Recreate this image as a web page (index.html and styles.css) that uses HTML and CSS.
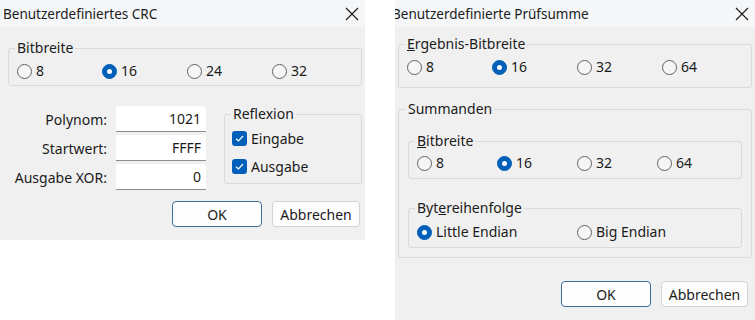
FILE: index.html
```html
<!DOCTYPE html>
<html lang="de">
<head>
  <meta charset="UTF-8">
  <meta name="viewport" content="width=device-width, initial-scale=1.0">
  <title>Benutzerdefinierte Dialoge</title>
  <link rel="stylesheet" href="styles.css">
</head>
<body>

  <div class="screen">

    <!-- Dialog 1: CRC -->
    <section class="dialog dialog-crc">
      <header class="titlebar">
        <span class="title">Benutzerdefiniertes CRC</span>
        <svg class="close" width="14" height="14" viewBox="0 0 14 14">
          <path d="M1 1 L13 13 M13 1 L1 13" stroke="#1a1a1a" stroke-width="1.1" fill="none"/>
        </svg>
      </header>
      <div class="dialog-body">
        <fieldset class="group">
          <legend>Bitbreite</legend>
          <div class="radio-row crc-widths">
            <label class="radio"><span class="dot"></span>8</label>
            <label class="radio checked"><span class="dot"></span>16</label>
            <label class="radio"><span class="dot"></span>24</label>
            <label class="radio"><span class="dot"></span>32</label>
          </div>
        </fieldset>

        <div class="crc-params">
          <div class="fields">
            <span class="field-label">Polynom:</span>
            <div class="input">1021</div>
            <span class="field-label">Startwert:</span>
            <div class="input">FFFF</div>
            <span class="field-label">Ausgabe XOR:</span>
            <div class="input">0</div>
          </div>
          <fieldset class="group reflexion">
            <legend>Reflexion</legend>
            <label class="check"><span class="box"><svg width="11" height="11" viewBox="0 0 11 11"><path d="M2 5.8 L4.4 8 L9 3" stroke="#fff" stroke-width="1.2" fill="none"/></svg></span>Eingabe</label>
            <label class="check"><span class="box"><svg width="11" height="11" viewBox="0 0 11 11"><path d="M2 5.8 L4.4 8 L9 3" stroke="#fff" stroke-width="1.2" fill="none"/></svg></span>Ausgabe</label>
          </fieldset>
        </div>

        <div class="buttons">
          <button class="btn btn-default">OK</button>
          <button class="btn">Abbrechen</button>
        </div>
      </div>
    </section>

    <!-- Dialog 2: Pruefsumme -->
    <section class="dialog dialog-sum">
      <header class="titlebar">
        <span class="title">Benutzerdefinierte Prüfsumme</span>
        <svg class="close" width="14" height="14" viewBox="0 0 14 14">
          <path d="M1 1 L13 13 M13 1 L1 13" stroke="#1a1a1a" stroke-width="1.1" fill="none"/>
        </svg>
      </header>
      <div class="dialog-body">
        <fieldset class="group result">
          <legend><u>E</u>rgebnis-Bitbreite</legend>
          <div class="radio-row sum-widths">
            <label class="radio"><span class="dot"></span>8</label>
            <label class="radio checked"><span class="dot"></span>16</label>
            <label class="radio"><span class="dot"></span>32</label>
            <label class="radio"><span class="dot"></span>64</label>
          </div>
        </fieldset>

        <fieldset class="group summands">
          <legend>Summanden</legend>
          <fieldset class="group inner bits">
            <legend><u>B</u>itbreite</legend>
            <div class="radio-row inner-widths">
              <label class="radio"><span class="dot"></span>8</label>
              <label class="radio checked"><span class="dot"></span>16</label>
              <label class="radio"><span class="dot"></span>32</label>
              <label class="radio"><span class="dot"></span>64</label>
            </div>
          </fieldset>
          <fieldset class="group inner order">
            <legend>Byt<u>e</u>reihenfolge</legend>
            <div class="radio-row inner-widths">
              <label class="radio checked"><span class="dot"></span>Little Endian</label>
              <span></span>
              <label class="radio"><span class="dot"></span>Big Endian</label>
            </div>
          </fieldset>
        </fieldset>

        <div class="buttons">
          <button class="btn btn-default">OK</button>
          <button class="btn">Abbrechen</button>
        </div>
      </div>
    </section>

  </div>

</body>
</html>
```

FILE: styles.css
```css
/* Windows style dialogs */
body {
  margin: 0;
  background-color: #fff;
  font-family: "Noto Sans", "Open Sans", sans-serif;
  font-size: 14px;
  color: #1b1b1b;
}

.screen {
  display: flex;
  align-items: flex-start;
  gap: 30px;
}

.dialog {
  background-color: #f0f0f0;
  box-sizing: border-box;
  overflow: hidden;
}

.dialog-crc {
  width: 365px;
  height: 240px;
}

.dialog-sum {
  width: 360px;
  height: 320px;
}

.titlebar {
  height: 27px;
  background-color: #f4f6f8;
  display: flex;
  align-items: center;
  justify-content: space-between;
  padding-right: 6px;
  overflow: hidden;
}

.title {
  font-size: 13.5px;
  padding-left: 3px;
  white-space: nowrap;
}

.dialog-sum .title {
  padding-left: 0;
  margin-left: -3px;
}

.dialog-body {
  padding: 0 3px 0 8px;
}

.dialog-sum .dialog-body {
  padding: 0 3px 0 3px;
}

/* group boxes */
.group {
  margin: 0;
  padding: 0 8px 5px 8px;
  border: 1px solid #dadada;
  border-radius: 3px;
  min-width: 0;
}

.group legend {
  padding: 0 2px;
  margin-left: -2px;
  line-height: 18px;
}

.dialog-crc .group {
  margin-top: 12px;
}

/* radio buttons */
.radio-row {
  display: grid;
  margin-top: 5px;
  line-height: 18px;
}

.crc-widths {
  grid-template-columns: repeat(4, 85px);
}

.sum-widths {
  grid-template-columns: repeat(4, 85px);
}

.inner-widths {
  grid-template-columns: repeat(4, 80px);
}

.radio {
  display: flex;
  align-items: center;
  gap: 4px;
  height: 18px;
  white-space: nowrap;
}

.radio .dot {
  width: 13px;
  height: 13px;
  border: 1px solid #626262;
  border-radius: 50%;
  background-color: #f6f6f6;
  flex-shrink: 0;
  position: relative;
}

.radio.checked .dot {
  background-color: #005fb8;
  border-color: #005fb8;
}

.radio.checked .dot::after {
  content: "";
  position: absolute;
  left: 4px;
  top: 4px;
  width: 5px;
  height: 5px;
  border-radius: 50%;
  background-color: #fff;
}

/* crc parameters */
.crc-params {
  display: flex;
  align-items: flex-start;
  gap: 18px;
  margin-top: 20px;
}

.fields {
  display: grid;
  grid-template-columns: 99px 90px;
  column-gap: 9px;
  row-gap: 3px;
  align-items: center;
}

.field-label {
  text-align: right;
  margin-left: -8px;
  white-space: nowrap;
}

.input {
  background-color: #fff;
  height: 25px;
  line-height: 25px;
  border-bottom: 1px solid #8d8d8d;
  border-radius: 3px 3px 0 0;
  text-align: right;
  padding-right: 5px;
}

.dialog-crc .reflexion {
  width: 138px;
  box-sizing: border-box;
  margin-top: -1px;
  padding: 6px 8px 8px 8px;
  display: flex;
  flex-direction: column;
  gap: 10px;
}

.check {
  display: flex;
  align-items: center;
  gap: 4px;
  height: 18px;
  margin-left: -1px;
}

.check .box {
  width: 15px;
  height: 15px;
  border-radius: 3px;
  background-color: #005fb8;
  display: flex;
  align-items: center;
  justify-content: center;
}

/* buttons */
.buttons {
  display: flex;
  justify-content: flex-end;
  gap: 10px;
  margin-top: 11px;
  padding-right: 2px;
}

.btn {
  height: 26px;
  width: 88px;
  font-family: inherit;
  font-size: 14px;
  color: #1b1b1b;
  background-color: #fdfdfd;
  border: 1px solid #d3d3d3;
  border-radius: 4px;
}

.btn-default {
  width: 90px;
  border-color: #3d6d9c;
}

/* pruefsumme dialog */
.result {
  margin-top: 8px;
  padding-bottom: 11px;
}

.summands {
  margin-top: 12px;
  padding: 0 9px 9px 9px;
}

.inner {
  margin-top: 14px;
  padding-bottom: 6px;
}

.inner .radio-row {
  margin-top: 4px;
}

.inner.order {
  margin-top: 20px;
}

.inner.order .radio-row {
  margin-top: 6px;
}

.dialog-sum .buttons {
  margin-top: 23px;
  padding-right: 4px;
}

.dialog-sum .btn {
  width: 87px;
}

.dialog-sum .btn-default {
  width: 90px;
}
```
